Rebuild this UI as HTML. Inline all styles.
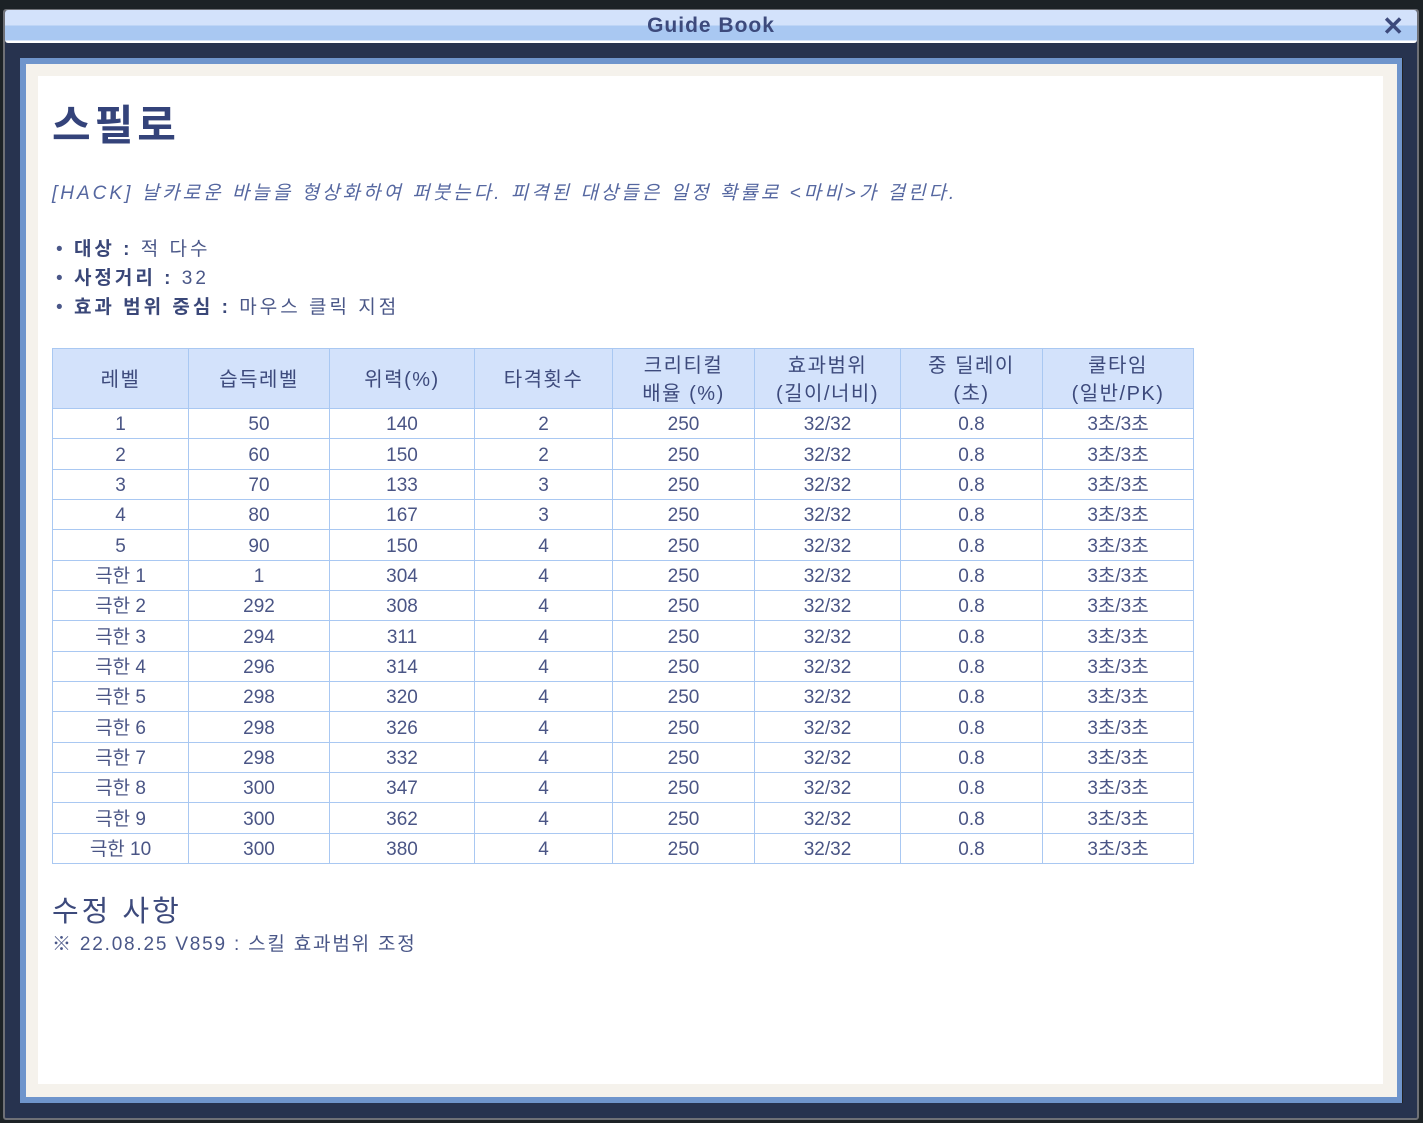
<!DOCTYPE html>
<html><head><meta charset="utf-8"><style>
*{margin:0;padding:0;box-sizing:border-box}
body{width:1423px;height:1123px;background:#1c2226;position:relative;overflow:hidden;font-family:"Liberation Sans","Noto Sans CJK KR",sans-serif;color:#3d4a7c}
.frame{position:absolute;left:3px;top:9px;width:1416px;height:1111px;background:#27334f;border:2px solid #6e7076;border-radius:3px}
.title{position:absolute;left:5px;top:10px;width:1412px;height:33px;background:linear-gradient(#d3e2fb 0,#d3e2fb 15px,#a9c8f2 16px,#a9c8f2 30px,#fff 31px);border-radius:3px;text-align:center;font-weight:bold;font-size:21px;line-height:32px;color:#3d4a7c;letter-spacing:1px}
.x{position:absolute;right:12px;top:0;font-size:26px;font-weight:bold;line-height:32px;color:#3d4a7c}
.inner{position:absolute;left:20px;top:58px;width:1383px;height:1045px;background:#6f95cc;border-right:1px solid #222}
.cream{position:absolute;left:26px;top:64px;width:1371px;height:1033px;background:#f5f2ec}
.white{position:absolute;left:38px;top:76px;width:1345px;height:1008px;background:#fff}
h1{position:absolute;left:52px;top:92px;font-size:42px;font-weight:bold;color:#34437a;letter-spacing:4px}
.desc{position:absolute;left:52px;top:178px;font-size:19px;font-style:italic;color:#5567a0;letter-spacing:3px}
.li{position:absolute;left:56px;font-size:19px;color:#4a5788;letter-spacing:3px}
.li b{color:#3a4778}
table{position:absolute;left:52px;top:348px;border-collapse:collapse;font-size:19px;color:#4a5585}
td,th{border:1px solid #a9c8f2;text-align:center;padding:0}
th{background:#d3e2fb;font-weight:normal;height:60px;line-height:28px;font-size:20px;color:#3d4a7c;letter-spacing:1.5px;padding-top:3px}
td{height:30.33px;line-height:26px;vertical-align:bottom}
h2{position:absolute;left:52px;top:888px;font-size:29px;font-weight:normal;color:#3d4a7c;letter-spacing:3px}
.note{position:absolute;left:52px;top:929px;font-size:19px;color:#4a5788;letter-spacing:1.8px}
</style></head><body>
<div class="frame"></div>
<div class="title">Guide Book<span class="x">✕</span></div>
<div class="inner"></div><div class="cream"></div><div class="white"></div>
<h1>스필로</h1>
<div class="desc">[HACK] 날카로운 바늘을 형상화하여 퍼붓는다. 피격된 대상들은 일정 확률로 &lt;마비&gt;가 걸린다.</div>
<div class="li" style="top:234px">• <b>대상 :</b> 적 다수</div>
<div class="li" style="top:263px">• <b>사정거리 :</b> 32</div>
<div class="li" style="top:292px">• <b>효과 범위 중심 :</b> 마우스 클릭 지점</div>
<table>
<colgroup><col style="width:136px"><col style="width:141px"><col style="width:145px"><col style="width:138px"><col style="width:142px"><col style="width:146px"><col style="width:142px"><col style="width:151px"></colgroup>
<tr><th>레벨</th><th>습득레벨</th><th>위력(%)</th><th>타격횟수</th><th>크리티컬<br>배율 (%)</th><th>효과범위<br>(길이/너비)</th><th>중 딜레이<br>(초)</th><th>쿨타임<br>(일반/PK)</th></tr>
<tr><td>1</td><td>50</td><td>140</td><td>2</td><td>250</td><td>32/32</td><td>0.8</td><td>3초/3초</td></tr>
<tr><td>2</td><td>60</td><td>150</td><td>2</td><td>250</td><td>32/32</td><td>0.8</td><td>3초/3초</td></tr>
<tr><td>3</td><td>70</td><td>133</td><td>3</td><td>250</td><td>32/32</td><td>0.8</td><td>3초/3초</td></tr>
<tr><td>4</td><td>80</td><td>167</td><td>3</td><td>250</td><td>32/32</td><td>0.8</td><td>3초/3초</td></tr>
<tr><td>5</td><td>90</td><td>150</td><td>4</td><td>250</td><td>32/32</td><td>0.8</td><td>3초/3초</td></tr>
<tr><td>극한 1</td><td>1</td><td>304</td><td>4</td><td>250</td><td>32/32</td><td>0.8</td><td>3초/3초</td></tr>
<tr><td>극한 2</td><td>292</td><td>308</td><td>4</td><td>250</td><td>32/32</td><td>0.8</td><td>3초/3초</td></tr>
<tr><td>극한 3</td><td>294</td><td>311</td><td>4</td><td>250</td><td>32/32</td><td>0.8</td><td>3초/3초</td></tr>
<tr><td>극한 4</td><td>296</td><td>314</td><td>4</td><td>250</td><td>32/32</td><td>0.8</td><td>3초/3초</td></tr>
<tr><td>극한 5</td><td>298</td><td>320</td><td>4</td><td>250</td><td>32/32</td><td>0.8</td><td>3초/3초</td></tr>
<tr><td>극한 6</td><td>298</td><td>326</td><td>4</td><td>250</td><td>32/32</td><td>0.8</td><td>3초/3초</td></tr>
<tr><td>극한 7</td><td>298</td><td>332</td><td>4</td><td>250</td><td>32/32</td><td>0.8</td><td>3초/3초</td></tr>
<tr><td>극한 8</td><td>300</td><td>347</td><td>4</td><td>250</td><td>32/32</td><td>0.8</td><td>3초/3초</td></tr>
<tr><td>극한 9</td><td>300</td><td>362</td><td>4</td><td>250</td><td>32/32</td><td>0.8</td><td>3초/3초</td></tr>
<tr><td>극한 10</td><td>300</td><td>380</td><td>4</td><td>250</td><td>32/32</td><td>0.8</td><td>3초/3초</td></tr>
</table>
<h2>수정 사항</h2>
<div class="note">※ 22.08.25 V859 : 스킬 효과범위 조정</div>
</body></html>
